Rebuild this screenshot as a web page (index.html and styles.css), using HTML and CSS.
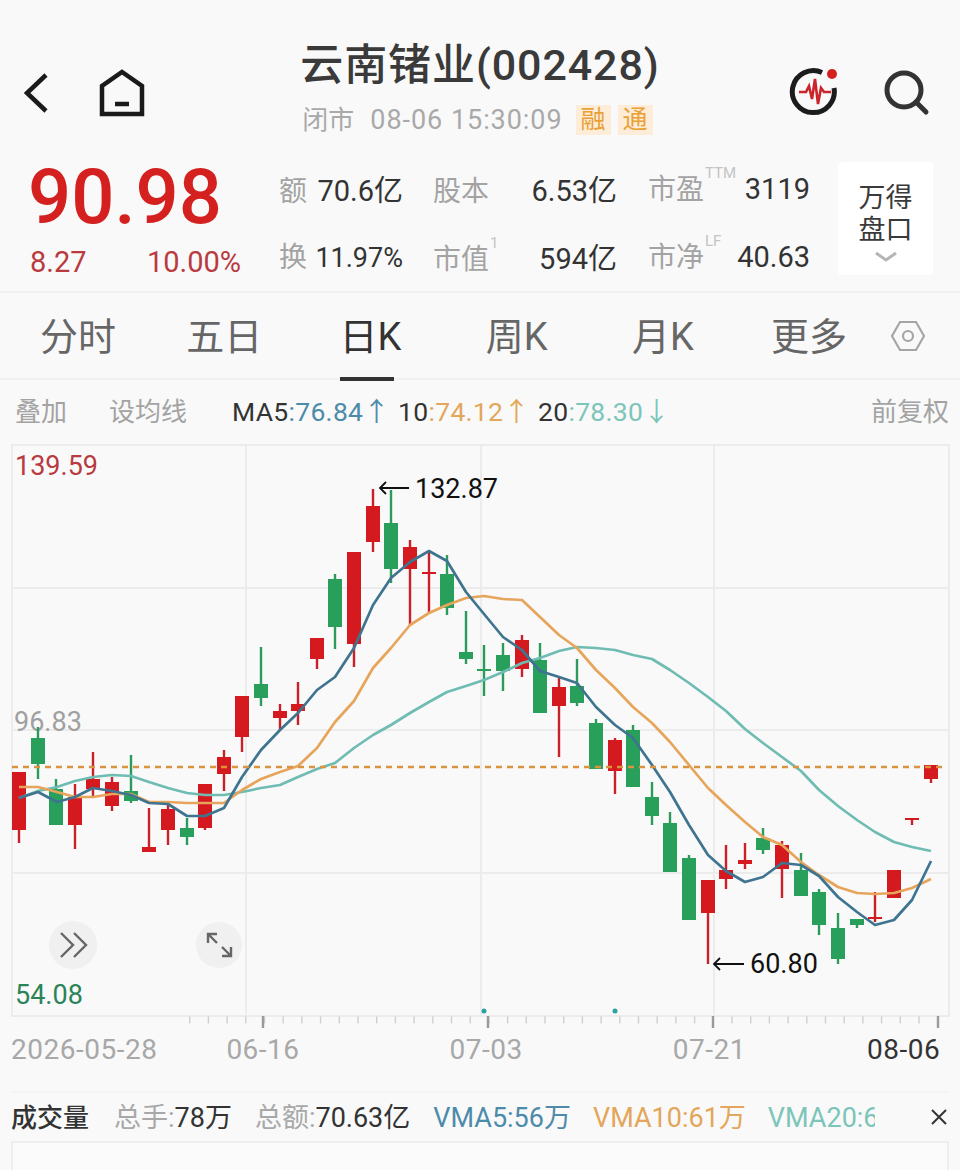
FILE: index.html
```html
<!DOCTYPE html>
<html lang="zh-CN">
  <head>
    <meta charset="utf-8">
    <title>云南锗业(002428)</title>
    <meta name="viewport" content="width=device-width, initial-scale=1.0">
    <link rel="stylesheet" href="styles.css">
  </head>
  <body>
    <main class="page">

      <header class="top-bar">
        <div class="top-left">
          <svg class="icon-back" width="24" height="40" viewBox="0 0 24 40"><path d="M22 2 L3 20 L22 38"/></svg>
          <svg class="icon-home" width="46" height="48" viewBox="0 0 46 48"><path d="M3 45V17L23 3L43 17V45Z"/><path d="M16 35H30"/></svg>
        </div>
        <div class="top-title">
          <h1>云南锗业(002428)</h1>
          <div class="status">
            <span class="status-state">闭市</span>
            <span class="status-date">08-06 15:30:09</span>
            <span class="tags"><span class="tag">融</span><span class="tag">通</span></span>
          </div>
        </div>
        <div class="top-right">
          <svg class="icon-pulse" width="52" height="52" viewBox="0 0 52 52">
            <path class="pulse-ring" d="M33 6.5A21 21 0 1 0 45 22"/>
            <circle class="pulse-dot" cx="43" cy="8" r="5"/>
            <path class="pulse-beat" d="M10 26H17L20 20L23 33L26 13L29 38L32 22L35 26H42"/>
          </svg>
          <svg class="icon-search" width="48" height="48" viewBox="0 0 48 48"><circle cx="22" cy="21" r="17"/><path d="M34 33L44 43"/></svg>
        </div>
      </header>

      <section class="quote">
        <div class="price-block">
          <div class="price">90.98</div>
          <div class="change"><span>8.27</span><span>10.00%</span></div>
        </div>
        <div class="stats">
          <div class="stat stat-short"><span class="stat-label">额</span><span class="stat-value">70.6亿</span></div>
          <div class="stat stat-mid"><span class="stat-label">股本</span><span class="stat-value">6.53亿</span></div>
          <div class="stat stat-long"><span class="stat-label">市盈<sup>TTM</sup></span><span class="stat-value">3119</span></div>
          <div class="stat stat-short"><span class="stat-label">换</span><span class="stat-value stat-value-pct">11.97%</span></div>
          <div class="stat stat-mid"><span class="stat-label">市值<sup>1</sup></span><span class="stat-value">594亿</span></div>
          <div class="stat stat-long"><span class="stat-label">市净<sup>LF</sup></span><span class="stat-value">40.63</span></div>
        </div>
        <div class="depth">
          <span>万得</span>
          <span>盘口</span>
          <svg width="24" height="12" viewBox="0 0 24 12"><path d="M2 2L12 9L22 2"/></svg>
        </div>
      </section>

      <nav class="tabs">
        <a class="tab">分时</a>
        <a class="tab">五日</a>
        <a class="tab tab-active">日K</a>
        <a class="tab">周K</a>
        <a class="tab">月K</a>
        <a class="tab">更多</a>
        <svg class="icon-hex" width="36" height="32" viewBox="0 0 36 32"><path d="M10 2H26L34 16L26 30H10L2 16Z"/><circle cx="18" cy="16" r="5"/></svg>
      </nav>

      <div class="ma-bar">
        <span class="ma-action">叠加</span>
        <span class="ma-action ma-setting">设均线</span>
        <span class="ma-item ma-first">MA5<span class="ma-blue">:76.84↑</span></span>
        <span class="ma-item">10<span class="ma-orange">:74.12↑</span></span>
        <span class="ma-item">20<span class="ma-teal">:78.30↓</span></span>
        <span class="ma-action ma-adjust">前复权</span>
      </div>

      <svg class="chart" width="960" height="590" viewBox="0 444 960 590">
        <!-- grid -->
        <path class="grid" d="M12 445H949V1016H12Z M246 445V1016 M481 445V1016 M714 445V1016 M12 588H949 M12 730H949 M12 873H949"/>

        <!-- price labels -->
        <text class="label-high" x="15" y="475">139.59</text>
        <text class="label-mid" x="14" y="731">96.83</text>
        <text class="label-low" x="15" y="1004">54.08</text>

        <!-- candles -->
        <g class="up"><path d="M19 772V843"/><rect x="12" y="772" width="14" height="58"/></g>
        <g class="down"><path d="M38 727V779"/><rect x="31" y="738" width="14" height="26"/></g>
        <g class="down"><path d="M56 779V825"/><rect x="49" y="789" width="14" height="36"/></g>
        <g class="up"><path d="M75 784V849"/><rect x="68" y="797" width="14" height="28"/></g>
        <g class="up"><path d="M93 752V797"/><rect x="86" y="779" width="14" height="10"/></g>
        <g class="up"><path d="M112 777V811"/><rect x="105" y="782" width="14" height="24"/></g>
        <g class="down"><path d="M131 755V803"/><rect x="124" y="791" width="14" height="10"/></g>
        <g class="up"><path d="M149 808V852"/><rect x="142" y="847" width="14" height="5"/></g>
        <g class="up"><path d="M168 803V845"/><rect x="161" y="809" width="14" height="21"/></g>
        <g class="down"><path d="M187 818V845"/><rect x="180" y="828" width="14" height="9"/></g>
        <g class="up"><path d="M205 784V830"/><rect x="198" y="784" width="14" height="44"/></g>
        <g class="up"><path d="M224 750V791"/><rect x="217" y="757" width="14" height="17"/></g>
        <g class="up"><path d="M242 696V752"/><rect x="235" y="696" width="14" height="41"/></g>
        <g class="down"><path d="M261 647V706"/><rect x="254" y="684" width="14" height="14"/></g>
        <g class="up"><path d="M280 704V730"/><rect x="273" y="711" width="14" height="7"/></g>
        <g class="up"><path d="M298 682V725"/><rect x="291" y="704" width="14" height="7"/></g>
        <g class="up"><path d="M317 638V669"/><rect x="310" y="638" width="14" height="21"/></g>
        <g class="down"><path d="M335 574V649"/><rect x="328" y="579" width="14" height="48"/></g>
        <g class="up"><path d="M354 552V667"/><rect x="347" y="552" width="14" height="92"/></g>
        <g class="up"><path d="M373 489V552"/><rect x="366" y="506" width="14" height="36"/></g>
        <g class="down"><path d="M391 490V583"/><rect x="384" y="523" width="14" height="46"/></g>
        <g class="up"><path d="M410 540V625"/><rect x="403" y="547" width="14" height="22"/></g>
        <g class="up"><path d="M429 551V613"/><rect x="422" y="572" width="14" height="2"/></g>
        <g class="down"><path d="M447 555V615"/><rect x="440" y="574" width="14" height="34"/></g>
        <g class="down"><path d="M466 611V664"/><rect x="459" y="652" width="14" height="7"/></g>
        <g class="down"><path d="M484 645V696"/><rect x="477" y="669" width="14" height="2"/></g>
        <g class="down"><path d="M503 643V691"/><rect x="496" y="655" width="14" height="16"/></g>
        <g class="up"><path d="M522 635V677"/><rect x="515" y="640" width="14" height="29"/></g>
        <g class="down"><path d="M540 643V713"/><rect x="533" y="660" width="14" height="53"/></g>
        <g class="up"><path d="M559 678V757"/><rect x="552" y="687" width="14" height="19"/></g>
        <g class="down"><path d="M577 659V706"/><rect x="570" y="686" width="14" height="17"/></g>
        <g class="down"><path d="M596 719V769"/><rect x="589" y="723" width="14" height="46"/></g>
        <g class="up"><path d="M615 738V794"/><rect x="608" y="740" width="14" height="31"/></g>
        <g class="down"><path d="M633 725V787"/><rect x="626" y="730" width="14" height="57"/></g>
        <g class="down"><path d="M652 782V825"/><rect x="645" y="797" width="14" height="19"/></g>
        <g class="down"><path d="M670 812V872"/><rect x="663" y="823" width="14" height="49"/></g>
        <g class="down"><path d="M689 855V920"/><rect x="682" y="858" width="14" height="62"/></g>
        <g class="up"><path d="M708 880V964"/><rect x="701" y="880" width="14" height="33"/></g>
        <g class="up"><path d="M726 845V889"/><rect x="719" y="870" width="14" height="9"/></g>
        <g class="up"><path d="M745 843V869"/><rect x="738" y="860" width="14" height="4"/></g>
        <g class="down"><path d="M763 828V854"/><rect x="756" y="838" width="14" height="12"/></g>
        <g class="up"><path d="M782 841V898"/><rect x="775" y="845" width="14" height="24"/></g>
        <g class="down"><path d="M801 853V896"/><rect x="794" y="870" width="14" height="26"/></g>
        <g class="down"><path d="M819 889V935"/><rect x="812" y="892" width="14" height="33"/></g>
        <g class="down"><path d="M838 913V964"/><rect x="831" y="928" width="14" height="31"/></g>
        <g class="down"><path d="M857 919V928"/><rect x="850" y="919" width="14" height="6"/></g>
        <g class="up"><path d="M875 892V922"/><rect x="868" y="917" width="14" height="2"/></g>
        <g class="up"><path d="M894 870V898"/><rect x="887" y="870" width="14" height="28"/></g>
        <g class="up"><path d="M912 818V825"/><rect x="905" y="818" width="14" height="2"/></g>
        <g class="up"><path d="M931 765V783"/><rect x="924" y="765" width="14" height="14"/></g>

        <!-- moving averages -->
        <polyline class="ma20" points="19,798 38,791 57,787 75,781 93,777 112,775 131,776 149,782 168,788 187,793 205,795 224,795 242,792 261,788 280,785 298,777 317,769 335,763 354,748 373,735 391,725 410,713 429,702 447,692 466,686 484,680 503,672 522,663 540,658 559,651 577,647 596,648 615,650 633,655 652,659 670,670 689,683 708,697 726,711 745,729 763,743 782,757 801,771 819,790 838,806 857,820 875,832 894,842 912,847 931,851"/>
        <polyline class="ma10" points="19,787 38,787 57,792 75,797 93,797 112,794 131,794 149,802 168,802 187,803 205,803 224,803 242,790 261,779 280,772 298,766 317,748 335,722 354,701 373,668 391,648 410,625 429,613 447,605 466,598 484,596 503,599 522,600 540,617 559,635 577,648 596,670 615,688 633,707 652,723 670,742 689,765 708,788 726,805 745,822 763,837 782,845 801,862 819,875 838,887 857,893 875,894 894,893 912,888 931,879"/>
        <polyline class="ma5" points="19,798 38,792 57,802 75,797 93,788 112,791 131,795 149,803 168,804 187,816 205,816 224,808 242,777 261,750 280,730 298,713 317,690 335,677 354,648 373,605 391,578 410,562 429,551 447,561 466,592 484,614 503,637 522,650 540,671 559,677 577,683 596,707 615,725 633,738 652,765 670,792 689,825 708,855 726,871 745,882 763,877 782,863 801,865 819,876 838,897 857,912 875,925 894,920 912,900 931,861"/>

        <!-- close line -->
        <path class="close-line" d="M12 767H943"/>

        <!-- high and low marks -->
        <path class="mark" d="M409 488H380M386 482L380 488L386 494"/>
        <text class="mark-text" x="415" y="498">132.87</text>
        <path class="mark" d="M744 964H714M720 958L714 964L720 970"/>
        <text class="mark-text" x="750" y="973">60.80</text>

        <!-- chart buttons -->
        <circle class="chart-btn" cx="73" cy="945" r="24"/>
        <path class="chart-btn-icon" d="M61 933L73 945L61 957M74 933L86 945L74 957"/>
        <circle class="chart-btn" cx="219" cy="945" r="23"/>
        <path class="chart-btn-icon" d="M208 943V934H217M208 934L217 943M231 947V956H222M231 956L222 947"/>

        <!-- axis -->
        <path class="tick-minor" d="M189 1020H940"/>
        <path class="tick-major" d="M263 1016V1028M488 1016V1028M713 1016V1028M938 1016V1028"/>
        <circle class="axis-dot" cx="484" cy="1011" r="2.5"/>
        <circle class="axis-dot" cx="615" cy="1011" r="2.5"/>
      </svg>

      <div class="dates">
        <span class="date date-first">2026-05-28</span>
        <span class="date date-second">06-16</span>
        <span class="date date-mid">07-03</span>
        <span class="date date-mid">07-21</span>
        <span class="date date-last">08-06</span>
      </div>

      <div class="volume-bar">
        <span class="vol-title">成交量</span>
        <span class="vol-item"><span class="vol-label">总手:</span>78万</span>
        <span class="vol-item"><span class="vol-label">总额:</span>70.63亿</span>
        <span class="vol-ma vol-blue">VMA5:56万</span>
        <span class="vol-ma vol-orange">VMA10:61万</span>
        <span class="vol-ma vol-teal">VMA20:61万</span>
        <svg class="icon-close" width="20" height="20" viewBox="0 0 20 20"><path d="M3 3L17 17M17 3L3 17"/></svg>
      </div>

      <div class="volume-chart"></div>

    </main>
  </body>
</html>
```

FILE: styles.css
```css
html {
  box-sizing: border-box;
}

*,
*:before,
*:after {
  box-sizing: inherit;
}

body {
  margin: 0;
  background: #f9f9f9;
  font-family: Roboto, "Noto Sans CJK SC", sans-serif;
  color: #333;
}

svg {
  display: block;
  fill: none;
}

.page {
  width: 960px;
  height: 1170px;
  overflow: hidden;
}

/* top bar */
.top-bar {
  display: grid;
  grid-template-columns: 1fr auto 1fr;
  height: 140px;
  padding-top: 40px;
}

.top-left,
.top-right {
  display: flex;
  align-items: center;
  height: 106px;
}

.top-left {
  padding-left: 24px;
  gap: 51px;
}

.top-right {
  justify-content: flex-end;
  padding-right: 30px;
  gap: 41px;
}

.icon-back path,
.icon-home path {
  stroke: #1a1a1a;
  stroke-width: 4.5;
}

.icon-search circle,
.icon-search path {
  stroke: #333;
  stroke-width: 5;
  stroke-linecap: round;
}

.icon-pulse {
  margin-bottom: 3px;
}

.pulse-ring {
  stroke: #1c1c1c;
  stroke-width: 5;
}

.pulse-dot {
  fill: #d4211f;
}

.pulse-beat {
  stroke: #c9252b;
  stroke-width: 2.6;
}

h1 {
  margin: 0;
  font-size: 43px;
  line-height: 50px;
  font-weight: 500;
  letter-spacing: .9px;
  color: #3a3a3a;
}

.status {
  display: flex;
  align-items: center;
  margin-top: 15px;
  padding-left: 2px;
  font-size: 26px;
  line-height: 30px;
  color: #a9a9a9;
}

.status-state {
  margin-right: 16px;
}

.status-date {
  font-size: 27px;
  letter-spacing: .95px;
}

.tags {
  display: flex;
  gap: 7px;
  margin-left: 13px;
}

.tag {
  width: 35px;
  height: 30px;
  background: #fdecd8;
  color: #e9a135;
  text-align: center;
  font-size: 25px;
}

/* quote row */
.quote {
  display: flex;
  height: 153px;
  padding: 22px 27px 0 30px;
  border-bottom: 2px solid #f0f0f0;
}

.price-block {
  width: 211px;
  color: #d4211f;
}

.price {
  margin-left: -2px;
  font-size: 76px;
  line-height: 70px;
  font-weight: 500;
}

.change {
  display: flex;
  justify-content: space-between;
  margin-top: 12px;
  font-size: 29px;
  line-height: 36px;
  color: #b93a40;
}

.stats {
  display: grid;
  grid-template-columns: 124px 184px 163px;
  column-gap: 30px;
  row-gap: 32px;
  align-content: start;
  width: 559px;
  margin-left: 38px;
  padding-top: 5px;
}

.stat {
  display: flex;
  align-items: baseline;
  justify-content: space-between;
  height: 36px;
  font-size: 29px;
}

.stat-long {
  padding-left: 1px;
}

.stat-label {
  position: relative;
  font-size: 28px;
  color: #a3a3a3;
}

.stat-value {
  color: #333;
}

.stat-value-pct {
  font-size: 27px;
}

sup {
  position: absolute;
  top: -3px;
  left: calc(100% + 1px);
  font-size: 15px;
  line-height: 18px;
  color: #c4c4c4;
}

.depth {
  display: flex;
  flex-direction: column;
  align-items: center;
  width: 95px;
  height: 113px;
  padding-top: 20px;
  background: #fff;
  border-radius: 4px;
  font-size: 27px;
  line-height: 32px;
  color: #3a3a3a;
}

.depth svg {
  margin-top: 5px;
}

.depth path {
  stroke: #b5b5b5;
  stroke-width: 3;
}

/* tabs */
.tabs {
  display: flex;
  align-items: center;
  height: 87px;
  padding-left: 5px;
  border-bottom: 2px solid #f0f0f0;
}

.tab {
  position: relative;
  display: block;
  width: 146.2px;
  padding-top: 4px;
  font-size: 38px;
  line-height: 83px;
  text-align: center;
  color: #666;
}

.tab-active {
  color: #333;
}

.tab-active:after {
  content: "";
  position: absolute;
  left: 43px;
  bottom: -2px;
  width: 54px;
  height: 4px;
  background: #333;
}

.icon-hex {
  margin-left: 8px;
}

.icon-hex path,
.icon-hex circle {
  stroke: #a5a5a5;
  stroke-width: 2.2;
}

/* moving average bar */
.ma-bar {
  display: flex;
  align-items: center;
  height: 64px;
  padding: 0 11px 6px 15px;
  font-size: 26px;
  color: #333;
}

.ma-action {
  color: #a3a3a3;
}

.ma-setting {
  margin-left: 42px;
}

.ma-first {
  margin-left: 45px;
}

.ma-item {
  margin-right: 8px;
  font-size: 26.5px;
  letter-spacing: .3px;
}

.ma-blue {
  color: #4d8bab;
}

.ma-orange {
  color: #e3a65a;
}

.ma-teal {
  color: #7cc5b9;
}

.ma-adjust {
  margin-left: auto;
}

/* chart */
.chart text {
  font-size: 27px;
}

.grid {
  stroke: #ececec;
  stroke-width: 2;
}

.label-high {
  fill: #b93a40;
}

.label-mid {
  fill: #a0a0a0;
}

.label-low {
  fill: #2a8458;
}

.up path {
  stroke: #c8212a;
  stroke-width: 2.4;
}

.up rect {
  fill: #d4191f;
}

.down path {
  stroke: #2c9a5c;
  stroke-width: 2.4;
}

.down rect {
  fill: #28a05c;
}

.ma5,
.ma10,
.ma20 {
  stroke-width: 2.7;
  stroke-linejoin: round;
}

.ma5 {
  stroke: #3f7490;
}

.ma10 {
  stroke: #e7a55c;
}

.ma20 {
  stroke: #6fbcb3;
}

.close-line {
  stroke: #d9943d;
  stroke-width: 2.6;
  stroke-dasharray: 6 5;
}

.mark {
  stroke: #111;
  stroke-width: 1.8;
}

.chart .mark-text {
  fill: #111;
}

.chart-btn {
  fill: #f0f0f0;
}

.chart-btn-icon {
  stroke: #666;
  stroke-width: 2.4;
}

.tick-minor {
  stroke: #cfcfcf;
  stroke-width: 7;
  stroke-dasharray: 1.4 17.3;
}

.tick-major {
  stroke: #9a9a9a;
  stroke-width: 2.4;
}

.axis-dot {
  fill: #2aa3a0;
}

/* dates under the chart */
.dates {
  display: flex;
  align-items: center;
  height: 30px;
  padding-left: 11px;
  font-size: 28px;
  letter-spacing: .5px;
  color: #a8a8a8;
}

.date-second {
  margin-left: 69px;
}

.date-mid {
  margin-left: 150px;
}

.date-last {
  margin-left: 121px;
  color: #333;
}

/* volume */
.volume-bar {
  position: relative;
  display: flex;
  align-items: center;
  height: 52px;
  margin: 27px 11px 0;
  padding-bottom: 4px;
  border-top: 2px solid #f3f3f3;
  border-bottom: 2px solid #eee;
  font-size: 27px;
  color: #333;
}

.vol-title {
  font-size: 26px;
  font-weight: 500;
  margin-right: 25px;
}

.vol-item {
  margin-right: 23px;
}

.vol-label {
  color: #a8a8a8;
}

.vol-ma {
  margin-right: 22px;
  white-space: nowrap;
}

.vol-blue {
  color: #4d8bab;
}

.vol-orange {
  color: #e3a65a;
}

.vol-teal {
  width: 107px;
  margin-right: 0;
  overflow: hidden;
  color: #7cc5b9;
}

.icon-close {
  position: absolute;
  right: 0;
  top: 14px;
}

.icon-close path {
  stroke: #333;
  stroke-width: 2;
}

.volume-chart {
  height: 40px;
  margin: 0 11px;
  border-left: 2px solid #eee;
  border-right: 2px solid #eee;
  background: #fbfbfb;
}
```
